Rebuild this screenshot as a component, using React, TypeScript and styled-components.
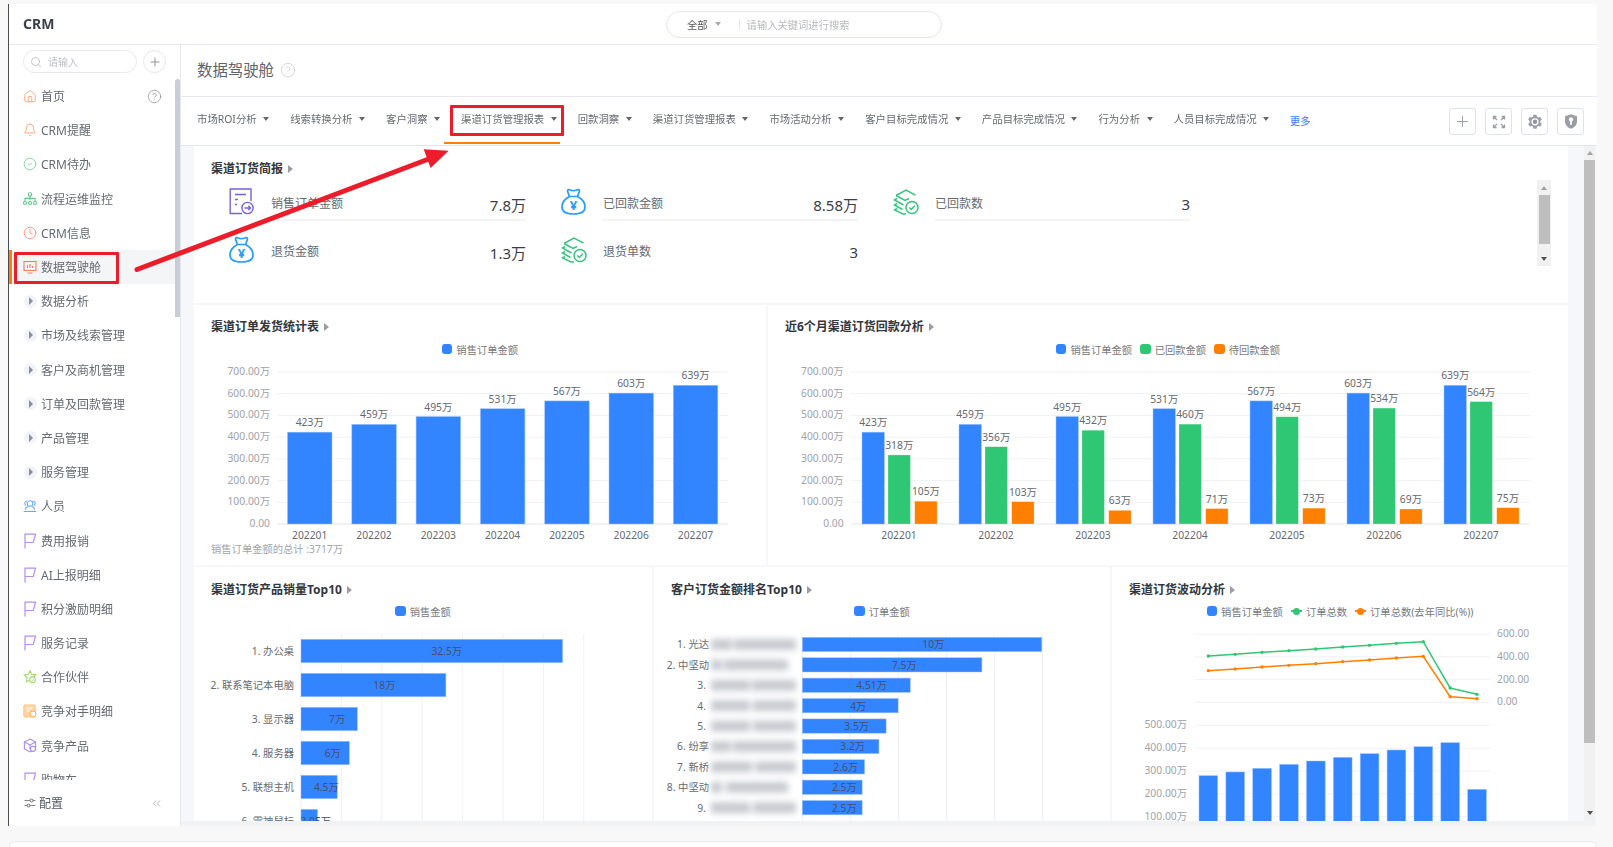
import type { ReactNode } from "react";
import styled, { createGlobalStyle } from "styled-components";
import { Bell, ChevronsLeft, CircleCheck, CircleHelp, Clock, House, Plus, Search } from "lucide-react";

const BLUE = "#3385ff";
const GREEN = "#2fc774";
const ORANGE = "#ff8000";
const RED = "#ec1c2a";
const GRID = "#eff1f5";

const GlobalStyle = createGlobalStyle`
  html, body {
    margin: 0;
    width: 1613px;
    height: 847px;
    overflow: hidden;
    background: #f8f8f9;
    font-family: "Noto Sans", "Noto Sans CJK SC", sans-serif;
  }
  * { box-sizing: border-box; }
`;

const Page = styled.div`
  position: relative;
  width: 1613px;
  height: 847px;
  padding: 4px 16px 0 8px;
  filter: blur(0.35px);
`;

const Frame = styled.div`
  height: 822px;
  background: #fff;
  border-left: 1px solid #4a4a55;
  border-radius: 0 6px 6px 0;
  display: flex;
  flex-direction: column;
  overflow: hidden;
`;

const NextCard = styled.div`
  height: 20px;
  margin: 15px 0 0 1px;
  background: #fff;
  border: 1px solid #e6e8eb;
  border-radius: 6px 6px 0 0;
`;

/* top bar */
const TopBar = styled.header`
  height: 41px;
  flex: none;
  display: flex;
  align-items: center;
  border-bottom: 1px solid #e6e9ef;
`;

const Logo = styled.div`
  width: 657px;
  padding: 0 0 2px 14px;
  font-size: 14px;
  font-weight: 700;
  color: #3a3f4a;
`;

const GlobalSearch = styled.div`
  width: 276px;
  height: 27px;
  border: 1px solid #e3e6ea;
  border-radius: 14px;
  display: flex;
  align-items: center;
  padding-left: 20px;
  font-size: 10.3px;
`;

const ScopeLabel = styled.span`
  color: #555;
  margin-right: 7px;
`;

const SearchDivider = styled.span`
  width: 1px;
  height: 11px;
  background: #e6e8eb;
  margin: 0 7px 0 18px;
`;

const Placeholder = styled.span`
  color: #b7b9bd;
`;

const Caret = styled.i<{ $color?: string }>`
  display: inline-block;
  flex: none;
  width: 0;
  height: 0;
  border-left: 3.5px solid transparent;
  border-right: 3.5px solid transparent;
  border-top: 4.5px solid ${(p) => p.$color ?? "#666"};
`;

const Body = styled.div`
  flex: 1;
  display: flex;
  min-height: 0;
`;

/* sidebar */
const Sidebar = styled.aside`
  width: 172px;
  flex: none;
  display: flex;
  flex-direction: column;
  border-right: 1px solid #e6e9ef;
`;

const SideSearchRow = styled.div`
  height: 34px;
  flex: none;
  display: flex;
  gap: 6px;
  padding: 5px 0 0 14px;
`;

const SideSearch = styled.div`
  width: 114px;
  height: 23px;
  border: 1px solid #e6e9ee;
  border-radius: 12px;
  display: flex;
  align-items: center;
  gap: 6px;
  padding-left: 6px;
  font-size: 10px;
  color: #bcbec3;
`;

const RoundButton = styled.div`
  width: 23px;
  height: 23px;
  border: 1px solid #e3e6ea;
  border-radius: 50%;
  display: flex;
  align-items: center;
  justify-content: center;
  color: #888;
`;

const SideScroll = styled.div`
  flex: 1;
  min-height: 0;
  display: flex;
  overflow: hidden;
`;

const NavList = styled.nav`
  width: 166px;
  flex: none;
`;

const SideThumb = styled.div`
  width: 5px;
  height: 238px;
  background: #c9ced6;
  border-radius: 3px 3px 0 0;
`;

const NavItem = styled.div<{ $active?: boolean }>`
  position: relative;
  height: 34.2px;
  display: flex;
  align-items: center;
  gap: 4px;
  padding-left: 14px;
  font-size: 12px;
  color: #666a72;
  background: ${(p) => (p.$active ? "#f4f5f7" : "transparent")};

  &::before {
    content: "";
    display: ${(p) => (p.$active ? "block" : "none")};
    position: absolute;
    left: 0;
    top: 0;
    bottom: 0;
    width: 3px;
    background: ${ORANGE};
  }
`;

const NavIcon = styled.span`
  width: 14px;
  height: 14px;
  flex: none;
  display: flex;
  align-items: center;
  justify-content: center;
`;

const Expander = styled.span`
  width: 13px;
  height: 13px;
  border-radius: 50%;
  background: #f1f3f8;
  display: flex;
  align-items: center;
  justify-content: center;

  &::after {
    content: "";
    width: 0;
    height: 0;
    margin-left: 2px;
    border-top: 4px solid transparent;
    border-bottom: 4px solid transparent;
    border-left: 4px solid #8a8f99;
  }
`;

const HelpSlot = styled.span`
  margin-left: auto;
  margin-right: 13px;
  display: flex;
  color: #9a9a9a;
`;

const NavRedBox = styled.div`
  position: absolute;
  left: 5px;
  top: 2px;
  width: 105px;
  height: 32px;
  border: 3px solid ${RED};
  border-radius: 1px;
`;

const SideFooter = styled.div`
  height: 46px;
  flex: none;
  display: flex;
  align-items: center;
  padding: 0 17px 0 15px;
  gap: 3px;
  font-size: 12px;
  color: #555a63;

  svg:last-child {
    margin-left: auto;
    color: #999;
  }
`;

/* main */
const Main = styled.main`
  flex: 1;
  min-width: 0;
  display: flex;
  flex-direction: column;
  background: #f1f2f4;
`;

const TitleBar = styled.div`
  height: 52px;
  flex: none;
  background: #fff;
  border-bottom: 1px solid #e6e9ef;
  display: flex;
  align-items: center;
  gap: 6px;
  padding: 0 0 2px 16px;
`;

const PageTitle = styled.h1`
  margin: 0;
  font-size: 15.4px;
  font-weight: 400;
  color: #5f636b;
`;

const TitleHelp = styled.span`
  display: flex;
  color: #cfd1d4;
`;

const TabBar = styled.div`
  height: 49px;
  flex: none;
  background: #fff;
  border-bottom: 1px solid #e1e5ec;
  display: flex;
  align-items: flex-start;
`;

const Tab = styled.div<{ $active?: boolean }>`
  position: relative;
  height: 47px;
  display: flex;
  align-items: center;
  padding: 0 3.5px 2px 17.5px;
  border-bottom: 2px solid ${(p) => (p.$active ? ORANGE : "transparent")};
  font-size: 10.4px;
  color: #666a72;
  white-space: nowrap;

  &:first-child {
    margin-left: -1.5px;
  }

  ${Caret} {
    margin-left: 6.5px;
  }
`;

const TabRedBox = styled.div`
  position: absolute;
  left: 6.5px;
  top: 8px;
  width: 114px;
  height: 31px;
  border: 3px solid ${RED};
  border-radius: 1px;
`;

const MoreLink = styled.a`
  margin: 17px 0 0 17px;
  font-size: 10.4px;
  line-height: 14px;
  color: #3a7bff;
`;

const Actions = styled.div`
  margin-left: auto;
  padding: 11px 13px 0 0;
  display: flex;
  gap: 9px;
`;

const ActionButton = styled.div`
  width: 27px;
  height: 27px;
  border: 1px solid #dfe3ea;
  border-radius: 3px;
  display: flex;
  align-items: center;
  justify-content: center;
  color: #9a9ea6;
`;

const ContentArea = styled.div`
  height: 675px;
  flex: none;
  display: flex;
  background: #f5f7fa;
  padding-left: 13px;
  padding-right: 2px;
`;

const Cards = styled.div`
  width: 1374px;
  flex: none;
  margin-right: 16px;
  display: flex;
  flex-direction: column;
  gap: 2px;
  overflow: hidden;
`;

const ChartRow = styled.div<{ $columns: string }>`
  display: grid;
  grid-template-columns: ${(p) => p.$columns};
  gap: 2px;
`;

const Card = styled.section<{ $height: number; $top: number }>`
  height: ${(p) => p.$height}px;
  background: #fff;
  padding-top: ${(p) => p.$top}px;
  overflow: hidden;
`;

const BriefCard = styled.section`
  height: 157px;
  flex: none;
  background: #fff;
  padding: 16px 17px 0 17px;
  display: flex;
`;

const BriefMain = styled.div`
  flex: 1;
`;

const CardTitle = styled.h2`
  margin: 0;
  padding-left: 17px;
  height: 14px;
  display: flex;
  align-items: center;
  gap: 5px;
  font-size: 12px;
  line-height: 14px;
  font-weight: 700;
  color: #33363c;

  &::after {
    content: "";
    width: 0;
    height: 0;
    border-top: 4.5px solid transparent;
    border-bottom: 4.5px solid transparent;
    border-left: 5px solid #9a9da3;
  }
`;

const BriefTitle = styled(CardTitle)`
  padding-left: 0;
`;

const KpiGrid = styled.div`
  margin: 12px 0 0 18px;
  display: grid;
  grid-template-columns: repeat(3, 332px);
  row-gap: 15px;
`;

const Kpi = styled.div`
  display: flex;
  align-items: flex-start;
  height: 33px;
`;

const KpiIcon = styled.span`
  width: 42px;
  flex: none;
  display: flex;
`;

const KpiBody = styled.div<{ $underline?: boolean }>`
  width: 255px;
  height: 33px;
  padding-bottom: 2px;
  display: flex;
  align-items: center;
  justify-content: space-between;
  border-bottom: 2px solid ${(p) => (p.$underline ? "#f3f4f6" : "transparent")};
`;

const KpiLabel = styled.span`
  font-size: 12px;
  color: #666a72;
`;

const KpiValue = styled.span`
  font-size: 15px;
  color: #3b3e44;
  position: relative;
  top: 1.5px;
`;

const ScrollTrack = styled.div<{ $width: number }>`
  width: ${(p) => p.$width}px;
  flex: none;
  background: #f1f1f1;
  display: flex;
  flex-direction: column;
  align-items: center;
`;

const MiniTrack = styled(ScrollTrack)`
  height: 86px;
  margin-top: 18px;
`;

const ArrowCell = styled.div<{ $height: number; $down?: boolean }>`
  height: ${(p) => p.$height}px;
  flex: none;
  display: flex;
  align-items: center;
  justify-content: center;
  margin-top: ${(p) => (p.$down ? "auto" : 0)};

  &::after {
    content: "";
    width: 0;
    height: 0;
    border-left: 3.5px solid transparent;
    border-right: 3.5px solid transparent;
    ${(p) => (p.$down ? "border-top: 4px solid #505050;" : "border-bottom: 4px solid #a3a3a3;")}
  }
`;

const Thumb = styled.div<{ $height: number }>`
  width: 100%;
  height: ${(p) => p.$height}px;
  background: #bebebe;
  flex: none;
`;

const MiniThumb = styled(Thumb)`
  width: 11px;
`;

const Legend = styled.div<{ $top: number }>`
  margin: ${(p) => p.$top}px 0 1px;
  height: 14px;
  display: flex;
  justify-content: center;
  gap: 8px;
`;

const LegendItem = styled.span`
  display: flex;
  align-items: center;
  gap: 4px;
  font-size: 10.3px;
  color: #777a80;
  white-space: nowrap;
`;

const Swatch = styled.i<{ $color: string }>`
  width: 10.5px;
  height: 10.5px;
  border-radius: 3px;
  background: ${(p) => p.$color};
`;

const LineMark = styled.i<{ $color: string }>`
  position: relative;
  width: 11px;
  height: 2px;
  background: ${(p) => p.$color};

  &::after {
    content: "";
    position: absolute;
    left: 2px;
    top: -2.5px;
    width: 7px;
    height: 7px;
    border-radius: 50%;
    background: ${(p) => p.$color};
  }
`;

const ChartSvg = styled.svg`
  display: block;
`;

const TotalNote = styled.div`
  padding-left: 17px;
  height: 14px;
  margin-top: 0.5px;
  font-size: 10.3px;
  line-height: 14px;
  color: #a3a5a9;
`;

const AxisText = styled.text`
  font-size: 10.3px;
  fill: #a0a3aa;
  dominant-baseline: central;
`;

const LabelText = styled.text`
  font-size: 10.3px;
  fill: #666a70;
  dominant-baseline: central;
`;

const InsideText = styled.text`
  font-size: 10.3px;
  fill: #46506e;
  text-anchor: middle;
  dominant-baseline: central;
`;

const AnnotationLayer = styled.svg`
  position: absolute;
  left: 0;
  top: 0;
  pointer-events: none;
`;

const Bar = ({ x, y, w, h, fill = BLUE }: { x: number; y: number; w: number; h: number; fill?: string }) => (
  <rect x={x} y={y} width={w} height={h} fill={fill} stroke={fill === BLUE ? "#9cc3ff" : "#fff"} strokeOpacity={fill === BLUE ? 0.8 : 0.4} strokeWidth={0.6} />
);

/* icons */
const FlagIcon = () => (
  <svg width="14" height="16" viewBox="0 0 14 16" fill="none" stroke="#b48df2" strokeWidth="1.2">
    <path d="M2 15.500V1.200h10.500L10.300 9.500H2" />
  </svg>
);

const TreeIcon = () => (
  <svg width="14" height="14" viewBox="0 0 14 14" fill="none" stroke="#5fc98c" strokeWidth="1.1">
    <circle cx="7" cy="2.400" r="1.700" />
    <path d="M7 4v4M2 9V6.400h10V9" />
    <circle cx="2" cy="11" r="1.500" />
    <circle cx="7" cy="11" r="1.500" />
    <circle cx="12" cy="11" r="1.500" />
  </svg>
);

const MonitorIcon = () => (
  <svg width="14" height="14" viewBox="0 0 14 14" fill="none" stroke="#f47a62" strokeWidth="1.100">
    <rect x="1" y="1.500" width="12" height="9" />
    <path d="M4.500 13h5M4.500 8V5M7 8V4M9.500 8V6" />
  </svg>
);

const PeopleIcon = () => (
  <svg width="15" height="14" viewBox="0 0 15 14" fill="none" stroke="#6aa8ff" strokeWidth="1.100">
    <circle cx="7.500" cy="4.300" r="3" />
    <path d="M5.500 7.500C3.500 8.200 2.500 9.300 2.500 11M9.500 7.500c2 .7 3 1.800 3 3.500M.8 12.800h13.400" />
    <path d="M4 1.700C2.700 2 1.800 3.200 2 4.600c.1 .9 .6 1.500 1.200 1.900M11 1.700c1.300 .3 2.200 1.500 2 2.900-.1 .9-.6 1.500-1.200 1.900" />
  </svg>
);

const StarIcon = () => (
  <svg width="14" height="14" viewBox="0 0 14 14" fill="none" stroke="#a5d86c" strokeWidth="1.100">
    <path d="M7 .8l1.800 3.600 4 .6-2.900 2.800.7 4L7 10 3.400 11.800l.7-4L1.200 5l4-.6z" />
    <circle cx="9.500" cy="9.700" r="2.800" fill="#fff" />
    <path d="M8.300 9.700l1 1 1.400-1.500" strokeWidth=".9" />
  </svg>
);

const FileIcon = () => (
  <svg width="14" height="14" viewBox="0 0 14 14">
    <rect x=".8" y="1" width="11.400" height="12" rx="1.200" fill="#ffd6a6" stroke="#ffc27c" />
    <path d="M3.500 4.200h6M3.500 7h3" stroke="#fff" strokeWidth="1.100" />
    <circle cx="10" cy="10" r="3" fill="#fff" stroke="#ffa94d" strokeWidth="1" />
  </svg>
);

const CubeIcon = () => (
  <svg width="14" height="15" viewBox="0 0 14 15" fill="none" stroke="#a78bf0" strokeWidth="1.100">
    <path d="M7 1l5.600 3v7L7 14 1.400 11V4z" />
    <path d="M1.400 4L7 7l5.600-3M7 7v4" />
    <circle cx="10" cy="10.800" r="2.600" fill="#fff" />
  </svg>
);

const SliderIcon = () => (
  <svg width="12" height="12" viewBox="0 0 12 12" fill="none" stroke="#888" strokeWidth="1.100">
    <path d="M.5 3.500h5.500M9 3.500h2.500M.5 8.500H3M6 8.500h5.500" />
    <circle cx="7.500" cy="3.500" r="1.500" />
    <circle cx="4.500" cy="8.500" r="1.500" />
  </svg>
);

const ExpandIcon = () => (
  <svg width="14" height="14" viewBox="0 0 14 14" fill="none" stroke="#9a9ea6" strokeWidth="1.300">
    <path d="M1.500 4.500v-3h3M1.500 1.500l3.500 3.500M9.500 1.500h3v3M12.500 1.500L9 5M1.500 9.500v3h3M1.500 12.500L5 9M9.500 12.500h3v-3M12.500 12.500L9 9" />
  </svg>
);

const GearIcon = () => (
  <svg width="16" height="16" viewBox="0 0 16 16">
    <path
      d="M6.500 .8h3l.5 2 1.300 .7 2-.6 1.500 2.600-1.500 1.500v1.500l1.500 1.500-1.500 2.600-2-.6-1.300 .7-.5 2h-3l-.5-2-1.300-.7-2 .6L1.200 10l1.500-1.500V7L1.200 5.500l1.500-2.600 2 .6L6 2.800z"
      fill="#9a9ea6"
    />
    <circle cx="8" cy="7.800" r="3.600" fill="#fff" />
    <circle cx="8" cy="7.800" r="2.200" fill="#8f939b" />
  </svg>
);

const ShieldIcon = () => (
  <svg width="16" height="17" viewBox="0 0 24 25">
    <path d="M12 1.500L21 4.500V12C21 17.500 17 21.500 12 23.500C7 21.500 3 17.500 3 12V4.500Z" fill="#9a9ea6" />
    <circle cx="12" cy="9.500" r="3.200" fill="#fff" />
    <rect x="10.700" y="11" width="2.600" height="6.500" fill="#fff" />
  </svg>
);

const DocKpi = () => (
  <svg width="25" height="27" viewBox="0 0 25 27" fill="none" stroke="#7a5fe0" strokeWidth="1.400">
    <path d="M13 25.500H1.200V1H22v12" />
    <path d="M6 6.500h11M6 11.500h3M6 16.500h2" />
    <circle cx="18.500" cy="20" r="5.600" fill="#fff" />
    <path d="M15.500 20h6M19.400 17.800l2.100 2.200-2.100 2.200" />
  </svg>
);

const BagKpi = () => (
  <svg width="25" height="27" viewBox="0 0 25 27" fill="none" stroke="#2a9df4" strokeWidth="1.700">
    <path d="M8.500 8.500C3.500 11 1 15.500 1 19c0 5 4.500 7 11.500 7S24 24 24 19c0-3.500-2.500-8-7.500-10.500z" />
    <path d="M8.500 8.500L6.500 3c0-1.600 1.600-1.600 2.700-1 1.500 .7 5 .7 6.600 0 1.100-.6 2.700-.6 2.700 1l-2 5.500" />
    <text x="12.500" y="22" textAnchor="middle" fontSize="13" fontWeight="700" fill="#2a9df4" stroke="none" fontFamily="Noto Sans">
      ¥
    </text>
  </svg>
);

const StackKpi = () => (
  <svg width="26" height="27" viewBox="0 0 26 27" fill="none" stroke="#36c47d" strokeWidth="1.500">
    <path d="M3 7.500L13 2l9.500 5.200" />
    <path d="M3 7.500l9 5 4-2" />
    <path d="M4 10.500L1.500 12l9 5M4 15.500L1.500 17l8 4.500M4 20.500L1.500 22l8.500 4h3" />
    <circle cx="19" cy="19.500" r="6" />
    <path d="M16.300 19.500l2 2 3.500-3.800" />
  </svg>
);

/* data */
type NavEntry = { label: string; icon: ReactNode; active?: boolean; help?: boolean };

const expander = <Expander />;

const NAV: NavEntry[] = [
  { label: "首页", icon: <House size={15} color="#ff9a6b" strokeWidth={1.4} />, help: true },
  { label: "CRM提醒", icon: <Bell size={14} color="#ff9a6b" strokeWidth={1.5} /> },
  { label: "CRM待办", icon: <CircleCheck size={14} color="#7fd39a" strokeWidth={1.5} /> },
  { label: "流程运维监控", icon: <TreeIcon /> },
  { label: "CRM信息", icon: <Clock size={14} color="#ff8f80" strokeWidth={1.5} /> },
  { label: "数据驾驶舱", icon: <MonitorIcon />, active: true },
  { label: "数据分析", icon: expander },
  { label: "市场及线索管理", icon: expander },
  { label: "客户及商机管理", icon: expander },
  { label: "订单及回款管理", icon: expander },
  { label: "产品管理", icon: expander },
  { label: "服务管理", icon: expander },
  { label: "人员", icon: <PeopleIcon /> },
  { label: "费用报销", icon: <FlagIcon /> },
  { label: "AI上报明细", icon: <FlagIcon /> },
  { label: "积分激励明细", icon: <FlagIcon /> },
  { label: "服务记录", icon: <FlagIcon /> },
  { label: "合作伙伴", icon: <StarIcon /> },
  { label: "竞争对手明细", icon: <FileIcon /> },
  { label: "竞争产品", icon: <CubeIcon /> },
  { label: "购物车", icon: <FlagIcon /> },
];

const TABS = [
  "市场ROI分析",
  "线索转换分析",
  "客户洞察",
  "渠道订货管理报表",
  "回款洞察",
  "渠道订货管理报表",
  "市场活动分析",
  "客户目标完成情况",
  "产品目标完成情况",
  "行为分析",
  "人员目标完成情况",
];

const MONTHS = ["202201", "202202", "202203", "202204", "202205", "202206", "202207"];
const ORDERS = [423, 459, 495, 531, 567, 603, 639];
const RECEIVED = [318, 356, 432, 460, 494, 534, 564];
const PENDING = [105, 103, 63, 71, 73, 69, 75];
const Y_TICKS = ["0.00", "100.00万", "200.00万", "300.00万", "400.00万", "500.00万", "600.00万", "700.00万"];

const BASE_Y = 524;
const UNIT = 0.2171;

const YAxis = ({ labelX, from, to }: { labelX: number; from: number; to: number }) => (
  <>
    {Y_TICKS.map((t, i) => {
      const y = BASE_Y - i * 21.71;
      return (
        <g key={t}>
          <line x1={from} x2={to} y1={y} y2={y} stroke={i === 0 ? "#e3e6ec" : GRID} />
          <AxisText x={labelX} y={y - 1} textAnchor="end">
            {t}
          </AxisText>
        </g>
      );
    })}
  </>
);

const MonthlyChart = () => (
  <ChartSvg width="572" height="184" viewBox="194 357 572 184">
    <YAxis labelX={270} from={277} to={728} />
    {ORDERS.map((v, i) => {
      const x = 287.5 + i * 64.3;
      const h = v * UNIT;
      return (
        <g key={v}>
          <Bar x={x} y={BASE_Y - h} w={44.5} h={h} />
          <LabelText x={x + 22.2} y={BASE_Y - h - 10} textAnchor="middle">
            {v}万
          </LabelText>
          <LabelText x={x + 22.2} y={535} textAnchor="middle">
            {MONTHS[i]}
          </LabelText>
        </g>
      );
    })}
  </ChartSvg>
);

const ReceiptChart = () => (
  <ChartSvg width="800" height="208" viewBox="768 357 800 208">
    <YAxis labelX={843.6} from={851} to={1530} />
    {MONTHS.map((m, i) => {
      const x = 862 + i * 97;
      const series: [number[], string, number][] = [
        [ORDERS, BLUE, 0],
        [RECEIVED, GREEN, 26],
        [PENDING, ORANGE, 52.7],
      ];
      return (
        <g key={m}>
          {series.map(([data, color, dx]) => {
            const h = data[i] * UNIT;
            return (
              <g key={color}>
                <Bar x={x + dx} y={BASE_Y - h} w={22.4} h={h} fill={color} />
                <LabelText x={x + dx + 11.2} y={BASE_Y - h - 10} textAnchor="middle">
                  {data[i]}万
                </LabelText>
              </g>
            );
          })}
          <LabelText x={x + 37} y={535} textAnchor="middle">
            {m}
          </LabelText>
        </g>
      );
    })}
  </ChartSvg>
);

const PRODUCTS: [string, number, string][] = [
  ["1. 办公桌", 32.5, "32.5万"],
  ["2. 联系笔记本电脑", 18, "18万"],
  ["3. 显示器", 7, "7万"],
  ["4. 服务器", 6, "6万"],
  ["5. 联想主机", 4.5, "4.5万"],
  ["6. 雷神鼠标", 2.05, "2.05万"],
];

const ProductChart = () => (
  <ChartSvg width="458" height="202" viewBox="194 619 458 202">
    {Array.from({ length: 8 }, (_, i) => (
      <line key={i} x1={301 + i * 40.4} x2={301 + i * 40.4} y1={634} y2={821} stroke={GRID} />
    ))}
    {PRODUCTS.map(([name, v, label], i) => {
      const y = 639.3 + i * 34;
      return (
        <g key={name}>
          <LabelText x={294} y={y + 11.7} textAnchor="end">
            {name}
          </LabelText>
          <Bar x={301} y={y} w={v * 8.05} h={23.4} />
          <InsideText x={307 + v * 4.3} y={y + 11.7}>
            {label}
          </InsideText>
        </g>
      );
    })}
  </ChartSvg>
);

const CUSTOMERS: [string, number, number, string, number[][]][] = [
  ["1. 光达", 10, 131, "10万", [[711, 732], [734, 796]]],
  ["2. 中坚动", 7.5, 102, "7.5万", [[711, 722], [724, 788]]],
  ["3.", 4.51, 69.4, "4.51万", [[711, 750], [752, 796]]],
  ["4.", 4, 56, "4万", [[711, 750], [753, 796]]],
  ["5.", 3.5, 54.4, "3.5万", [[711, 750], [753, 796]]],
  ["6. 纷享", 3.2, 50.4, "3.2万", [[711, 731], [733, 796]]],
  ["7. 新桥", 2.6, 43.4, "2.6万", [[711, 752], [755, 796]]],
  ["8. 中坚动", 2.5, 42, "2.5万", [[711, 722], [726, 788]]],
  ["9.", 2.5, 42, "2.5万", [[711, 750], [753, 796]]],
];

const CustomerChart = () => (
  <ChartSvg width="456" height="202" viewBox="654 619 456 202">
    <defs>
      <filter id="mosaic" x="-10%" y="-10%" width="120%" height="120%">
        <feGaussianBlur stdDeviation="3" />
      </filter>
    </defs>
    {Array.from({ length: 6 }, (_, i) => (
      <line key={i} x1={802.3 + i * 48} x2={802.3 + i * 48} y1={634} y2={821} stroke={GRID} />
    ))}
    {CUSTOMERS.map(([name, v, labelX, label], i) => {
      const y = 637.3 + i * 20.4;
      return (
        <g key={i}>
          <LabelText x={name.length > 2 ? 709 : 706} y={y + 7} textAnchor="end">
            {name}
          </LabelText>
          <Bar x={802.3} y={y} w={v * 23.95} h={14.3} />
          <InsideText x={802.3 + labelX} y={y + 7}>
            {label}
          </InsideText>
        </g>
      );
    })}
    <rect x={709} y={632} width={87} height={186} fill="#fff" />
    <g filter="url(#mosaic)">
      {CUSTOMERS.map(([name, , , , parts], i) =>
        parts.map(([a, b]) => <rect key={name + i + a} x={a} y={639 + i * 20.4} width={b - a} height={11} fill="#c8cad0" />),
      )}
    </g>
  </ChartSvg>
);

const POINTS_X = Array.from({ length: 11 }, (_, i) => 1208.3 + i * 26.87);
const toY = (rows: number[]) => rows.map((v) => 570 + v / 3);
const GREEN_Y = toY([258, 253, 247, 242, 237, 231, 226, 220, 215, 354, 373]);
const ORANGE_Y = toY([302, 297, 291, 286, 281, 275, 270, 264, 259, 380, 386]);
const BAR_TOPS = toY([617, 606, 595, 583, 573, 562, 551, 540, 530, 518, 658]);

const TrendLine = ({ ys, color }: { ys: number[]; color: string }) => (
  <>
    <polyline fill="none" stroke={color} strokeWidth="1.5" points={ys.map((y, i) => `${POINTS_X[i]},${y}`).join(" ")} />
    {ys.map((y, i) => (
      <circle key={i} cx={POINTS_X[i]} cy={y} r="1.7" fill={color} />
    ))}
  </>
);

const WaveChart = () => (
  <ChartSvg width="456" height="202" viewBox="1112 619 456 202">
    {["0.00", "200.00", "400.00", "600.00"].map((t, i) => {
      const y = 702.3 - i * 22.7;
      return (
        <g key={t}>
          <line x1={1195} x2={1490} y1={y} y2={y} stroke={GRID} />
          <AxisText x={1497} y={y - 1}>
            {t}
          </AxisText>
        </g>
      );
    })}
    {["100.00万", "200.00万", "300.00万", "400.00万", "500.00万"].map((t, i) => {
      const y = 816.7 - i * 22.85;
      return (
        <g key={t}>
          <line x1={1195} x2={1490} y1={y} y2={y} stroke={GRID} />
          <AxisText x={1187} y={y - 1} textAnchor="end">
            {t}
          </AxisText>
        </g>
      );
    })}
    {BAR_TOPS.map((top, i) => (
      <Bar key={i} x={1199 + i * 26.87} y={top} w={18.7} h={821 - top + 4} />
    ))}
    <TrendLine ys={GREEN_Y} color={GREEN} />
    <TrendLine ys={ORANGE_Y} color={ORANGE} />
  </ChartSvg>
);

const KPIS: { label: string; value: string; icon: ReactNode; underline?: boolean }[] = [
  { label: "销售订单金额", value: "7.8万", icon: <DocKpi />, underline: true },
  { label: "已回款金额", value: "8.58万", icon: <BagKpi />, underline: true },
  { label: "已回款数", value: "3", icon: <StackKpi />, underline: true },
  { label: "退货金额", value: "1.3万", icon: <BagKpi /> },
  { label: "退货单数", value: "3", icon: <StackKpi /> },
];

export default function App() {
  return (
    <Page>
      <GlobalStyle />
      <Frame>
        <TopBar>
          <Logo>CRM</Logo>
          <GlobalSearch>
            <ScopeLabel>全部</ScopeLabel>
            <Caret $color="#aaa" />
            <SearchDivider />
            <Placeholder>请输入关键词进行搜索</Placeholder>
          </GlobalSearch>
        </TopBar>
        <Body>
          <Sidebar>
            <SideSearchRow>
              <SideSearch>
                <Search size={12} color="#aab0b8" strokeWidth={1.4} />
                请输入
              </SideSearch>
              <RoundButton>
                <Plus size={14} strokeWidth={1.5} />
              </RoundButton>
            </SideSearchRow>
            <SideScroll>
              <NavList>
                {NAV.map((item) => (
                  <NavItem key={item.label} $active={item.active}>
                    <NavIcon>{item.icon}</NavIcon>
                    {item.label}
                    {item.help && (
                      <HelpSlot>
                        <CircleHelp size={15} strokeWidth={1.3} />
                      </HelpSlot>
                    )}
                    {item.active && <NavRedBox />}
                  </NavItem>
                ))}
              </NavList>
              <SideThumb />
            </SideScroll>
            <SideFooter>
              <SliderIcon />
              配置
              <ChevronsLeft size={13} strokeWidth={1.3} />
            </SideFooter>
          </Sidebar>
          <Main>
            <TitleBar>
              <PageTitle>数据驾驶舱</PageTitle>
              <TitleHelp>
                <CircleHelp size={16} strokeWidth={1.3} />
              </TitleHelp>
            </TitleBar>
            <TabBar>
              {TABS.map((t, i) => (
                <Tab key={t + i} $active={i === 3}>
                  {t}
                  <Caret />
                  {i === 3 && <TabRedBox />}
                </Tab>
              ))}
              <MoreLink>更多</MoreLink>
              <Actions>
                <ActionButton>
                  <Plus size={17} strokeWidth={1.4} />
                </ActionButton>
                <ActionButton>
                  <ExpandIcon />
                </ActionButton>
                <ActionButton>
                  <GearIcon />
                </ActionButton>
                <ActionButton>
                  <ShieldIcon />
                </ActionButton>
              </Actions>
            </TabBar>
            <ContentArea>
              <Cards>
                <BriefCard>
                  <BriefMain>
                    <BriefTitle>渠道订货简报</BriefTitle>
                    <KpiGrid>
                      {KPIS.map((k) => (
                        <Kpi key={k.label}>
                          <KpiIcon>{k.icon}</KpiIcon>
                          <KpiBody $underline={k.underline}>
                            <KpiLabel>{k.label}</KpiLabel>
                            <KpiValue>{k.value}</KpiValue>
                          </KpiBody>
                        </Kpi>
                      ))}
                    </KpiGrid>
                  </BriefMain>
                  <MiniTrack $width={14}>
                    <ArrowCell $height={15} />
                    <MiniThumb $height={49} />
                    <ArrowCell $height={15} $down />
                  </MiniTrack>
                </BriefCard>
                <ChartRow $columns="572px 800px">
                  <Card $height={260} $top={15}>
                    <CardTitle>渠道订单发货统计表</CardTitle>
                    <Legend $top={8}>
                      <LegendItem>
                        <Swatch $color={BLUE} />
                        销售订单金额
                      </LegendItem>
                    </Legend>
                    <MonthlyChart />
                    <TotalNote>销售订单金额的总计 :3717万</TotalNote>
                  </Card>
                  <Card $height={260} $top={15}>
                    <CardTitle>近6个月渠道订货回款分析</CardTitle>
                    <Legend $top={8}>
                      <LegendItem>
                        <Swatch $color={BLUE} />
                        销售订单金额
                      </LegendItem>
                      <LegendItem>
                        <Swatch $color={GREEN} />
                        已回款金额
                      </LegendItem>
                      <LegendItem>
                        <Swatch $color={ORANGE} />
                        待回款金额
                      </LegendItem>
                    </Legend>
                    <ReceiptChart />
                  </Card>
                </ChartRow>
                <ChartRow $columns="458px 456px 456px">
                  <Card $height={254} $top={16}>
                    <CardTitle>渠道订货产品销量Top10</CardTitle>
                    <Legend $top={7}>
                      <LegendItem>
                        <Swatch $color={BLUE} />
                        销售金额
                      </LegendItem>
                    </Legend>
                    <ProductChart />
                  </Card>
                  <Card $height={254} $top={16}>
                    <CardTitle>客户订货金额排名Top10</CardTitle>
                    <Legend $top={7}>
                      <LegendItem>
                        <Swatch $color={BLUE} />
                        订单金额
                      </LegendItem>
                    </Legend>
                    <CustomerChart />
                  </Card>
                  <Card $height={254} $top={16}>
                    <CardTitle>渠道订货波动分析</CardTitle>
                    <Legend $top={7}>
                      <LegendItem>
                        <Swatch $color={BLUE} />
                        销售订单金额
                      </LegendItem>
                      <LegendItem>
                        <LineMark $color={GREEN} />
                        订单总数
                      </LegendItem>
                      <LegendItem>
                        <LineMark $color={ORANGE} />
                        订单总数(去年同比(%))
                      </LegendItem>
                    </Legend>
                    <WaveChart />
                  </Card>
                </ChartRow>
              </Cards>
              <ScrollTrack $width={11}>
                <ArrowCell $height={14} />
                <Thumb $height={583} />
                <ArrowCell $height={16} $down />
              </ScrollTrack>
            </ContentArea>
          </Main>
        </Body>
      </Frame>
      <NextCard />
      <AnnotationLayer width="1613" height="847" viewBox="0 0 1613 847">
        <path d="M137 269.500L434 157" stroke={RED} strokeWidth="5" strokeLinecap="round" fill="none" />
        <path d="M448.600 150.700L423.700 149.300L430.600 168z" fill={RED} />
      </AnnotationLayer>
    </Page>
  );
}
